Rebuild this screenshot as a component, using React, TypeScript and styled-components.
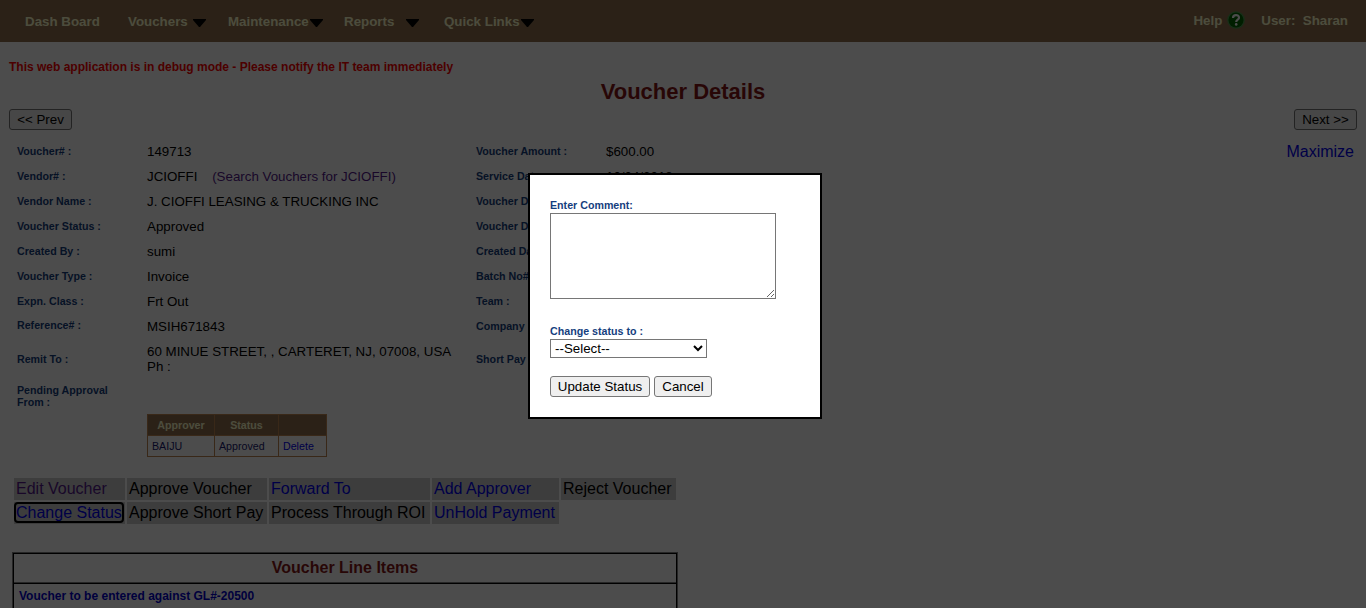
import React from "react";
import styled, { createGlobalStyle } from "styled-components";

const GlobalStyle = createGlobalStyle`
  * { box-sizing: border-box; }
  html, body { margin: 0; padding: 0; background: #fff; overflow: hidden; }
  body { font-family: "Liberation Sans", Arial, sans-serif; font-size: 13.333px; color: #000; }
`;

const Page = styled.div`
  height: 608px;
  overflow: hidden;
  display: flex;
  flex-direction: column;
`;

const Header = styled.header`
  flex: none;
  height: 42px;
  background: #90704e;
  display: flex;
  justify-content: space-between;
  padding: 0 18px 0 25px;
  color: #ffffcc;
  font-weight: bold;
  line-height: 15px;
`;

const Nav = styled.nav`
  display: flex;
  padding-top: 14px;
`;

const NavItem = styled.div<{ $width: number }>`
  width: ${(p) => p.$width}px;
  display: flex;
  white-space: nowrap;
`;

const NavLabel = styled.span<{ $width: number }>`
  width: ${(p) => p.$width}px;
`;

const Arrow = styled.svg`
  margin-top: 5px;
  flex: none;
`;

const UserArea = styled.div`
  display: flex;
  padding-top: 13px;
  white-space: pre;
`;

const HelpIcon = styled.svg`
  margin: -2px 16px 0 5px;
`;

const Debug = styled.p`
  margin: 18px 0 0 9px;
  font-size: 12px;
  line-height: 15px;
  font-weight: bold;
  color: #f00;
`;

const Title = styled.h1`
  margin: 4px 0 0;
  text-align: center;
  font-size: 22px;
  line-height: 26px;
  color: #861717;
`;

const Pager = styled.div`
  display: flex;
  justify-content: space-between;
  padding: 0 9px;
  margin-top: 4px;
`;

const Button = styled.button<{ $width: number }>`
  width: ${(p) => p.$width}px;
  height: 21px;
  padding: 0;
  border: 1px solid #767676;
  border-radius: 3px;
  background: #efefef;
  font: 13.333px "Liberation Sans", Arial, sans-serif;
  color: #000;
`;

const Link = styled.a<{ $visited?: boolean }>`
  color: ${(p) => (p.$visited ? "#551a8b" : "#0000ee")};
`;

const Details = styled.section`
  display: flex;
  padding: 8px 12px 0 17px;
`;

const Column = styled.div<{ $width: number }>`
  width: ${(p) => p.$width}px;
`;

const Maximize = styled.div`
  margin-left: auto;
  font-size: 16px;
  line-height: 27px;
`;

const Row = styled.div<{ $height?: number }>`
  height: ${(p) => p.$height ?? 25}px;
  display: flex;
  align-items: center;
  line-height: 15px;
`;

const Label = styled.div<{ $top?: number; $bottom?: number }>`
  width: 130px;
  flex: none;
  padding: ${(p) => p.$top ?? 0}px 30px ${(p) => p.$bottom ?? 0}px 0;
  font-size: 10.667px;
  line-height: 12px;
  font-weight: bold;
  color: #153e7e;
`;

const Value = styled.div`
  white-space: pre;
  padding-top: 1px;
`;

const Approvers = styled.table`
  margin: 4px 0 0 147px;
  width: 180px;
  border-collapse: collapse;
  table-layout: fixed;
  font-size: 10.667px;
  line-height: 13px;
  th, td { border: 1px solid #c08850; height: 21px; }
  th { background: #90704e; color: #ffffcc; padding: 0; }
  td { padding: 0 4px; color: #191970; }
`;

const Actions = styled.table`
  margin: 19px 0 0 12px;
  width: 666px;
  border-spacing: 2px;
  table-layout: fixed;
  font-size: 16px;
  line-height: 18px;
`;

const Action = styled.td<{ $empty?: boolean }>`
  height: 22px;
  padding: 0 2px;
  background: ${(p) => (p.$empty ? "transparent" : "#cccccc")};
  white-space: nowrap;
`;

const FocusedLink = styled(Link)`
  outline: 2px solid #000;
  border-radius: 2px;
`;

const LineItems = styled.section`
  margin: 26px 0 0 12px;
  width: 666px;
  height: 80px;
  border: 1px solid #808080;
  box-shadow: inset 0 0 0 1px #000;
  padding: 1px;
`;

const LineTitle = styled.h2`
  margin: 0;
  height: 30px;
  border-bottom: 1px solid #000;
  box-shadow: inset 0 -1px 0 #808080;
  text-align: center;
  font-size: 16px;
  line-height: 27px;
  color: #861717;
`;

const LineNote = styled.div`
  padding: 5px 5px;
  font-size: 12px;
  line-height: 15px;
  font-weight: bold;
  color: #0000cd;
`;

const Backdrop = styled.div`
  position: fixed;
  inset: 0;
  background: rgba(0, 0, 0, 0.7);
`;

const Dialog = styled.div`
  position: fixed;
  left: 528px;
  top: 173px;
  width: 294px;
  height: 246px;
  border: 2px solid #000;
  background: #fff;
  padding: 24px 20px 0;
  display: flex;
  flex-direction: column;
  align-items: flex-start;
`;

const Comment = styled.textarea`
  flex: none;
  width: 226px;
  height: 86px;
  margin: 2px 0 26px;
  border: 1px solid #767676;
  background: #fff;
`;

const Select = styled.select`
  flex: none;
  width: 157px;
  height: 19px;
  margin: 2px 0 18px;
  border: 1px solid #767676;
  border-radius: 0;
  background: #fff;
  color: #000;
  font: 13.333px "Liberation Sans", Arial, sans-serif;
`;

const Buttons = styled.div`
  display: flex;
  gap: 4px;
`;

const menu = [
  { text: "Dash Board", width: 103 },
  { text: "Vouchers", width: 100, arrow: 65 },
  { text: "Maintenance", width: 116, arrow: 82 },
  { text: "Reports", width: 100, arrow: 62 },
  { text: "Quick Links", width: 100, arrow: 77 },
];

type Field = {
  label: string;
  value?: React.ReactNode;
  height?: number;
  top?: number;
  bottom?: number;
};

const left: Field[] = [
  { label: "Voucher# :", value: "149713" },
  {
    label: "Vendor# :",
    value: <>JCIOFFI{"    "}<Link $visited>(Search Vouchers for JCIOFFI)</Link></>,
  },
  { label: "Vendor Name :", value: "J. CIOFFI LEASING & TRUCKING INC" },
  { label: "Voucher Status :", value: "Approved" },
  { label: "Created By :", value: "sumi" },
  { label: "Voucher Type :", value: "Invoice" },
  { label: "Expn. Class :", value: "Frt Out" },
  { label: "Reference# :", value: "MSIH671843", bottom: 2 },
  {
    label: "Remit To :",
    value: "60 MINUE STREET, , CARTERET, NJ, 07008, USA\nPh :",
    height: 40,
    top: 2,
  },
  { label: "Pending Approval From :", height: 32, top: 4 },
];

const right: Field[] = [
  { label: "Voucher Amount :", value: "$600.00" },
  { label: "Service Date :", value: "10/04/2018" },
  { label: "Voucher Date :" },
  { label: "Voucher Due :" },
  { label: "Created Date :" },
  { label: "Batch No# :" },
  { label: "Team :" },
  { label: "Company :" },
  { label: "Short Pay :", height: 40, top: 2 },
];

function Fields({ items, width }: { items: Field[]; width: number }) {
  return (
    <Column $width={width}>
      {items.map((f) => (
        <Row key={f.label} $height={f.height}>
          <Label $top={f.top} $bottom={f.bottom}>{f.label}</Label>
          <Value>{f.value}</Value>
        </Row>
      ))}
    </Column>
  );
}

export default function App() {
  return (
    <>
      <GlobalStyle />
      <Page>
        <Header>
          <Nav>
            {menu.map((m) => (
              <NavItem key={m.text} $width={m.width}>
                <NavLabel $width={m.arrow ?? m.width}>{m.text}</NavLabel>
                {m.arrow && (
                  <Arrow width="13" height="8" viewBox="0 0 13 8">
                    <path d="M0 0H13V1L7 8H6L0 1Z" fill="#000" />
                  </Arrow>
                )}
              </NavItem>
            ))}
          </Nav>
          <UserArea>
            Help
            <HelpIcon width="18" height="18" viewBox="0 0 18 18">
              <circle cx="9" cy="9" r="8.8" fill="#4f9a4f" />
              <circle cx="9" cy="9" r="7.5" fill="#006400" />
              <path d="M6 7C6 3.2 12 3.2 12 6.7C12 8.7 9.2 8.6 9.2 11" fill="none" stroke="#fff" strokeWidth="2.2" />
              <circle cx="9.2" cy="13.4" r="1.3" fill="#fff" />
            </HelpIcon>
            {"User:  Sharan"}
          </UserArea>
        </Header>
        <Debug>This web application is in debug mode - Please notify the IT team immediately</Debug>
        <Title>Voucher Details</Title>
        <Pager>
          <Button $width={63}>&lt;&lt; Prev</Button>
          <Button $width={63}>Next &gt;&gt;</Button>
        </Pager>
        <Details>
          <Fields items={left} width={459} />
          <Fields items={right} width={400} />
          <Maximize><Link>Maximize</Link></Maximize>
        </Details>
        <Approvers>
          <colgroup><col width="67" /><col width="64" /><col width="48" /></colgroup>
          <tbody>
            <tr><th>Approver</th><th>Status</th><th /></tr>
            <tr><td>BAIJU</td><td>Approved</td><td><Link>Delete</Link></td></tr>
          </tbody>
        </Approvers>
        <Actions>
          <colgroup><col width="111" /><col width="140" /><col width="161" /><col width="127" /><col width="115" /></colgroup>
          <tbody>
            <tr>
              <Action><Link $visited>Edit Voucher</Link></Action>
              <Action>Approve Voucher</Action>
              <Action><Link>Forward To</Link></Action>
              <Action><Link>Add Approver</Link></Action>
              <Action>Reject Voucher</Action>
            </tr>
            <tr>
              <Action><FocusedLink>Change Status</FocusedLink></Action>
              <Action>Approve Short Pay</Action>
              <Action>Process Through ROI</Action>
              <Action><Link>UnHold Payment</Link></Action>
              <Action $empty />
            </tr>
          </tbody>
        </Actions>
        <LineItems>
          <LineTitle>Voucher Line Items</LineTitle>
          <LineNote>Voucher to be entered against GL#-20500</LineNote>
        </LineItems>
      </Page>
      <Backdrop />
      <Dialog>
        <Label>Enter Comment:</Label>
        <Comment />
        <Label>Change status to :</Label>
        <Select><option>--Select--</option></Select>
        <Buttons>
          <Button $width={100}>Update Status</Button>
          <Button $width={58}>Cancel</Button>
        </Buttons>
      </Dialog>
    </>
  );
}
